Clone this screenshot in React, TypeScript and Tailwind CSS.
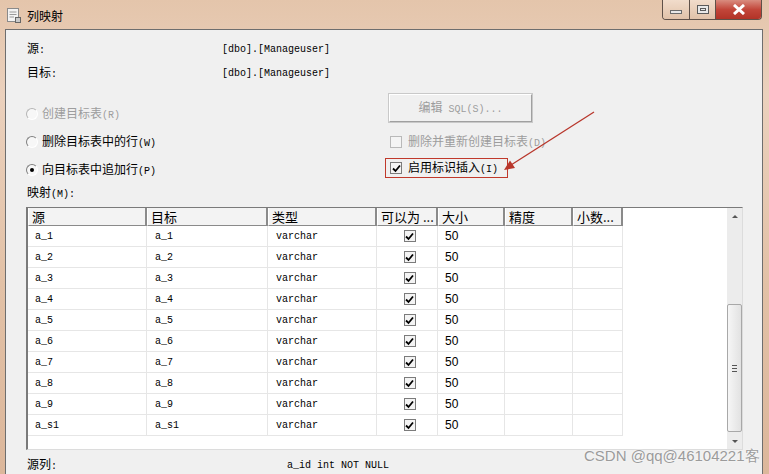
import React from 'react';

const cjk = "font-['Noto_Sans_CJK_SC','Noto_Sans',sans-serif]";
const mono = "font-['Liberation_Mono','DejaVu_Sans_Mono',monospace]";

// ASCII runs look like the small SimSun latin glyphs, so render them in mono 10px
const Mixed: React.FC<{ text: string; className?: string }> = ({ text, className }) => (
  <span className={`${cjk} text-[12px] leading-none whitespace-pre ${className ?? ''}`}>
    {text
      .split(/([\x00-\x7f]+)/)
      .filter(Boolean)
      .map((part, i) =>
        /^[\x00-\x7f]+$/.test(part) ? (
          <span key={i} className={`${mono} text-[10px]`}>
            {part}
          </span>
        ) : (
          <span key={i}>{part}</span>
        )
      )}
  </span>
);

const Radio: React.FC<{ checked?: boolean; disabled?: boolean }> = ({ checked, disabled }) => (
  <span
    className={`flex h-[12px] w-[12px] items-center justify-center rounded-full border border-b-white border-r-white ${
      disabled ? 'border-l-[#b5b5b5] border-t-[#b5b5b5]' : 'border-l-[#7f7f7f] border-t-[#7f7f7f]'
    } bg-[#f7f7f7]`}
  >
    {checked && <span className="h-[4px] w-[4px] rounded-full bg-black" />}
  </span>
);

const Check = () => (
  <svg width="9" height="9" viewBox="0 0 9 9">
    <polyline points="1,4.5 3.5,7 8,1.5" fill="none" stroke="#000" strokeWidth="1.8" />
  </svg>
);

const Box: React.FC<{ checked?: boolean; disabled?: boolean }> = ({ checked, disabled }) => (
  <span
    className={`flex h-[12px] w-[12px] items-center justify-center border ${
      disabled ? 'border-[#b9b9b9] bg-[#f4f4f4]' : 'border-[#7b7b7b] bg-[#f4f4f4]'
    }`}
  >
    {checked && <Check />}
  </span>
);

const cols = [
  { label: '源', w: 'w-[119px]' },
  { label: '目标', w: 'w-[121px]' },
  { label: '类型', w: 'w-[109px]' },
  { label: '可以为 ...', w: 'w-[61px]' },
  { label: '大小', w: 'w-[67px]' },
  { label: '精度', w: 'w-[68px]' },
  { label: '小数...', w: 'w-[50px]' },
];

const rows = ['a_1', 'a_2', 'a_3', 'a_4', 'a_5', 'a_6', 'a_7', 'a_8', 'a_9', 'a_s1'];

const cell = 'h-[21px] shrink-0 border-b border-r border-[#e6e6e6] flex items-center';

export default function App() {
  return (
    <div className="relative flex h-[474px] w-[769px] flex-col overflow-hidden bg-[linear-gradient(180deg,#e4c5ab_0%,#ebd1bd_20%,#e2c1a6_60%,#dcb79b_100%)]">
      {/* title bar */}
      <div className="flex h-[29px] shrink-0 items-start justify-between">
        <div className="flex items-center pl-[7px] pt-[8px]">
          <svg width="14" height="15" viewBox="0 0 14 15">
            <rect x="0.5" y="0.5" width="11" height="13" fill="#f3f3f3" stroke="#8a8a8a" />
            <line x1="2.5" y1="4" x2="9.5" y2="4" stroke="#9a9a9a" />
            <line x1="2.5" y1="6.5" x2="9.5" y2="6.5" stroke="#9a9a9a" />
            <line x1="2.5" y1="9" x2="7" y2="9" stroke="#9a9a9a" />
            <rect x="8.5" y="9.5" width="5" height="5" fill="#c9c9c9" stroke="#666" />
          </svg>
          <span className={`${cjk} ml-[6px] text-[12px] leading-none text-black`}>列映射</span>
        </div>
        <div className="mr-[7px] flex h-[20px] overflow-hidden rounded-b-[4px] border border-t-0 border-[#5f5149]">
          <div className="flex w-[27px] items-center justify-center border-r border-[#5f5149] bg-[linear-gradient(180deg,#f1dccb,#e1c2a9)]">
            <span className="mt-[5px] h-[4px] w-[12px] border border-[#6b6b6b] bg-[#e8e8e8]" />
          </div>
          <div className="flex w-[26px] items-center justify-center border-r border-[#5f5149] bg-[linear-gradient(180deg,#f1dccb,#e1c2a9)]">
            <span className="flex h-[9px] w-[12px] items-center justify-center border border-[#5a5a5a] bg-[#e8e8e8]">
              <span className="h-[3px] w-[6px] border border-[#5a5a5a]" />
            </span>
          </div>
          <div className="flex w-[45px] items-center justify-center bg-[linear-gradient(180deg,#d98c7f,#c2463a_50%,#b23327)]">
            <svg width="14" height="11" viewBox="0 0 14 11">
              <path d="M2 1 L12 10 M12 1 L2 10" stroke="#fff" strokeWidth="3" />
            </svg>
          </div>
        </div>
      </div>

      {/* client area */}
      <div className="ml-[5px] flex w-[758px] flex-1 flex-col border-l border-r border-t border-[#6e6e6e] bg-[#f0f0f0] pl-[20px] pr-[19px] pt-[7px]">
        <div className="flex h-[24px] items-center">
          <Mixed text="源:" className="w-[196px] pl-[1px]" />
          <span className={`${mono} text-[10px]`}>[dbo].[Manageuser]</span>
        </div>
        <div className="flex h-[24px] items-center">
          <Mixed text="目标:" className="w-[196px] pl-[1px]" />
          <span className={`${mono} text-[10px]`}>[dbo].[Manageuser]</span>
        </div>

        <div className="flex h-[99px]">
          <div className="flex w-[363px] flex-col pt-[15px]">
            <div className="flex h-[28px] items-center gap-[4px] text-[#9d9d9d]">
              <Radio disabled />
              <Mixed text="创建目标表(R)" />
            </div>
            <div className="flex h-[28px] items-center gap-[4px] text-black">
              <Radio />
              <Mixed text="删除目标表中的行(W)" />
            </div>
            <div className="flex h-[28px] items-center gap-[4px] text-black">
              <Radio checked />
              <Mixed text="向目标表中追加行(P)" />
            </div>
          </div>
          <div className="flex flex-col pt-[9px]">
            <div className="flex h-[28px] w-[143px] items-center justify-center border border-b-[#a0a0a0] border-l-white border-r-[#a0a0a0] border-t-white bg-[#f0f0f0] text-[#9d9d9d] shadow-[0_0_0_1px_#c9c9c9]">
              <Mixed text="编辑 SQL(S)..." />
            </div>
            <div className="mt-[9px] flex h-[22px] items-center gap-[6px] pl-[1px] text-[#9d9d9d]">
              <Box disabled />
              <Mixed text="删除并重新创建目标表(D)" />
            </div>
            <div className="-ml-[4px] mt-[5px] flex h-[20px] w-[123px] items-center gap-[6px] border border-[#c0392b] pl-[4px] text-black">
              <Box checked />
              <Mixed text="启用标识插入(I)" />
            </div>
          </div>
        </div>

        <div className="flex h-[18px] items-center">
          <Mixed text="映射(M):" className="pl-[1px]" />
        </div>

        {/* grid */}
        <div className="mt-[5px] flex h-[243px] border-b border-l-2 border-r border-t border-b-[#dcdcdc] border-l-[#7a7a7a] border-r-[#dcdcdc] border-t-[#7a7a7a] bg-white">
          <div className="flex flex-1 flex-col">
            <div className="flex h-[18px] shrink-0">
              {cols.map((c) => (
                <div
                  key={c.label}
                  className={`${c.w} flex shrink-0 items-center border-b border-l border-r-2 border-b-[#8a8a8a] border-l-white border-r-[#8a8a8a] bg-[#f3f3f3] pl-[3px]`}
                >
                  <span className={`${cjk} text-[13px] leading-none text-black`}>{c.label}</span>
                </div>
              ))}
            </div>
            {rows.map((r) => (
              <div key={r} className="flex">
                <div className={`${cell} w-[119px] pl-[7px]`}>
                  <span className={`${mono} text-[10px]`}>{r}</span>
                </div>
                <div className={`${cell} w-[121px] pl-[8px]`}>
                  <span className={`${mono} text-[10px]`}>{r}</span>
                </div>
                <div className={`${cell} w-[109px] pl-[8px]`}>
                  <span className={`${mono} text-[10px]`}>varchar</span>
                </div>
                <div className={`${cell} w-[61px] justify-center pl-[5px]`}>
                  <Box checked />
                </div>
                <div className={`${cell} w-[67px] pl-[7px]`}>
                  <span className="font-['Liberation_Sans',sans-serif] text-[12px] leading-none">50</span>
                </div>
                <div className={`${cell} w-[68px]`} />
                <div className={`${cell} w-[50px]`} />
              </div>
            ))}
          </div>
          {/* scrollbar */}
          <div className="flex w-[15px] flex-col bg-[#ececec]">
            <div className="flex h-[17px] items-center justify-center">
              <span className="border-x-[3px] border-b-[3px] border-x-transparent border-b-[#555]" />
            </div>
            <div className="h-[79px]" />
            <div className="flex h-[128px] items-center justify-center rounded-[2px] border border-[#a8a8a8] bg-[linear-gradient(90deg,#f6f6f6,#e2e2e2)]">
              <div className="flex flex-col gap-[2px]">
                <span className="h-px w-[5px] bg-[#555]" />
                <span className="h-px w-[5px] bg-[#555]" />
                <span className="h-px w-[5px] bg-[#555]" />
              </div>
            </div>
            <div className="flex-1" />
            <div className="flex h-[15px] items-center justify-center">
              <span className="border-x-[3px] border-t-[3px] border-x-transparent border-t-[#555]" />
            </div>
          </div>
        </div>

        <div className="flex h-[24px] items-center pt-[6px]">
          <Mixed text="源列:" className="w-[261px] pl-[1px]" />
          <span className={`${mono} text-[10px]`}>a_id int NOT NULL</span>
        </div>
      </div>

      {/* red annotation arrow */}
      <svg className="pointer-events-none absolute left-0 top-0" width="769" height="474">
        <line x1="594" y1="112" x2="511" y2="165" stroke="#b8362b" strokeWidth="1.3" />
        <polygon points="504,170 515,168 510,160.5" fill="#b8362b" />
      </svg>

      {/* watermark */}
      <span className="pointer-events-none absolute left-[584px] top-[447px] font-['Liberation_Sans',sans-serif] text-[15px] leading-[18px] text-[#9b9b9b] [text-shadow:0_0_2px_#fff]">
        CSDN @qq@46104221客
      </span>
    </div>
  );
}
